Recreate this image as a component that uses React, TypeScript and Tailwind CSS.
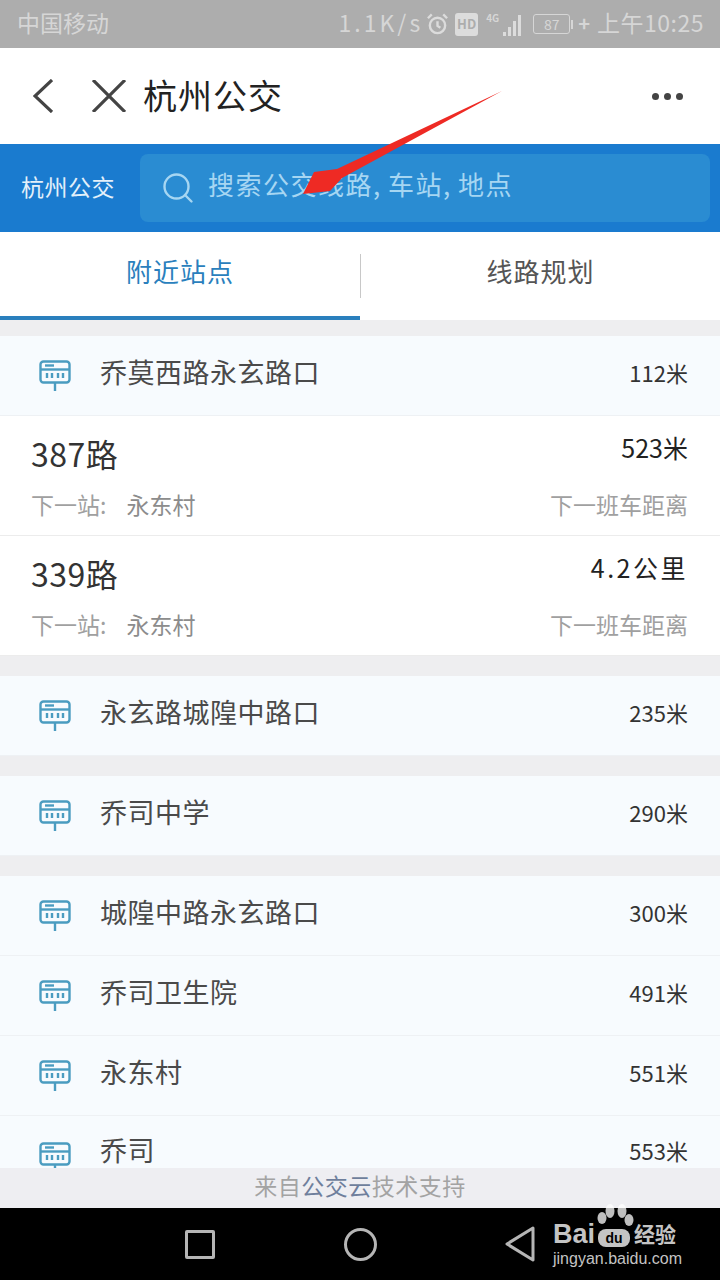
import { Search } from "lucide-react";

const font = { fontFamily: '"Noto Sans CJK SC", "Liberation Sans", sans-serif' };

function StopIcon() {
  return (
    <svg className="shrink-0" width="32" height="31" viewBox="0 0 32 31" fill="none" stroke="#4a9cc0" strokeWidth="2.4">
      <rect x="1.5" y="1.5" width="29" height="21" rx="3" />
      <path d="M1.5 9.5h29" />
      <path d="M6 5.5h9" />
      <path d="M8 13v5M13 13v5M19 13v5M24 13v5" />
      <path d="M16 22v9" />
    </svg>
  );
}

function Stop({ name, dist }: { name: string; dist: string }) {
  return (
    <div className="flex h-20 shrink-0 items-center border-b border-[#eef1f4] bg-[#f7fbfe] pl-[39px] pr-8">
      <StopIcon />
      <span className="ml-[29px] flex-1 pb-[6px] text-[27px] tracking-[0.5px] text-[#4a4a4a]">{name}</span>
      <span className="pb-[6px] text-[22px] text-[#333]">{dist}</span>
    </div>
  );
}

function Route({ name, dist, distClass }: { name: string; dist: string; distClass: string }) {
  return (
    <div className="flex h-[120px] shrink-0 flex-col justify-between border-b border-[#ececec] bg-white pt-[14px] pb-[14px] pl-[31px] pr-8">
      <div className="flex items-start justify-between">
        <span className="text-[32px] leading-[46px] tracking-[0.5px] text-[#333]">{name}</span>
        <span className={distClass}>{dist}</span>
      </div>
      <div className="flex items-center justify-between text-[23px] leading-[34px] text-[#a0a0a0]">
        <span>
          下一站:<span className="ml-5 text-[#8c8c8c]">永东村</span>
        </span>
        <span>下一班车距离</span>
      </div>
    </div>
  );
}

export default function App() {
  return (
    <div className="relative flex h-[1280px] w-[720px] flex-col overflow-hidden bg-white" style={font}>
      {/* status bar */}
      <div className="flex h-12 shrink-0 items-center bg-[#adadad] pl-[17px] pr-4 text-[#d6d6d6]">
        <span className="flex-1 pb-[3px] text-[23px]">中国移动</span>
        <span className="pb-[3px] text-[23px] tracking-[3px]">1.1K/s</span>
        <svg className="ml-[3px]" width="23" height="24" viewBox="0 0 24 24" fill="none" stroke="#dcdcdc" strokeWidth="2.5">
          <circle cx="12" cy="13.5" r="8" />
          <path d="M12 9v5l3 2M2 6l4-4M22 6l-4-4" />
        </svg>
        <span className="ml-[6px] flex h-[23px] w-[23px] items-center justify-center rounded-[3px] bg-[#dcdcdc] text-[13px] font-bold text-[#adadad]">
          HD
        </span>
        <span className="ml-2 flex h-6 items-end gap-[2px]">
          <span className="mr-[2px] self-start text-[10px] leading-[12px] font-bold">4G</span>
          <span className="h-[4px] w-[3px] bg-[#dcdcdc]" />
          <span className="h-[9px] w-[3px] bg-[#dcdcdc]" />
          <span className="h-[15px] w-[3px] bg-[#dcdcdc]" />
          <span className="h-[21px] w-[3px] bg-[#dcdcdc]" />
        </span>
        <span className="ml-[12px] flex h-[20px] w-[37px] items-center justify-center rounded-[3px] border border-[#d6d6d6] text-[14px] leading-none">
          87
        </span>
        <span className="ml-[1px] h-[9px] w-[2px] bg-[#d6d6d6]" />
        <span className="ml-[5px] pb-[3px] text-[20px] leading-none font-bold">+</span>
        <span className="ml-[7px] pb-[3px] text-[23px] tracking-[0.5px]">上午10:25</span>
      </div>

      {/* title bar */}
      <div className="flex h-24 shrink-0 items-center bg-white pr-[37px] pl-[33px] text-[#444]">
        <svg width="20" height="34" viewBox="0 0 20 34" fill="none" stroke="currentColor" strokeWidth="3.2">
          <path d="M19 1 L2 17 L19 33" />
        </svg>
        <svg className="ml-[39px]" width="34" height="32" viewBox="0 0 34 32" fill="none" stroke="currentColor" strokeWidth="3.2">
          <path d="M1 0 L33 32 M33 0 L1 32" />
        </svg>
        <span className="ml-[17px] flex-1 pb-[3px] text-[34px] tracking-[1px] text-[#222]">杭州公交</span>
        <span className="flex gap-[5px]">
          <span className="h-[7px] w-[7px] rounded-full bg-[#444]" />
          <span className="h-[7px] w-[7px] rounded-full bg-[#444]" />
          <span className="h-[7px] w-[7px] rounded-full bg-[#444]" />
        </span>
      </div>

      {/* search bar */}
      <div className="flex h-[88px] shrink-0 items-center bg-[#1a7bcf] pr-[10px] pl-[21px]">
        <span className="pb-[4px] text-[23px] tracking-[0.5px] text-[#e3f0fa]">杭州公交</span>
        <div className="ml-[25px] flex h-[68px] flex-1 items-center rounded-lg bg-[#2a8cd2] pl-[20px]">
          <Search size={36} strokeWidth={1.6} className="text-[#a6d6f2]" />
          <span className="ml-[12px] pb-[10px] text-[26px] tracking-[1.5px] text-[#a6d6f2]">
            搜索公交线路<span className="inline-block w-[15px]">,</span>车站<span className="inline-block w-[15px]">,</span>地点
          </span>
        </div>
      </div>

      {/* tabs */}
      <div className="flex h-[88px] shrink-0 bg-white">
        <div className="flex w-[360px] items-center justify-center border-b-4 border-[#2a7fbd] pb-[8px] text-[26px] tracking-[1px] text-[#2a7fbd]">
          附近站点
        </div>
        <div className="my-[22px] w-[1px] bg-[#c8c8c8]" />
        <div className="flex flex-1 items-center justify-center pb-[12px] text-[26px] tracking-[1px] text-[#555]">线路规划</div>
      </div>

      {/* list */}
      <div className="flex min-h-0 flex-1 flex-col overflow-hidden bg-[#eeeef0] pt-4">
        <Stop name="乔莫西路永玄路口" dist="112米" />
        <Route name="387路" dist="523米" distClass="text-[25px] leading-[34px] text-[#222]" />
        <Route name="339路" dist="4.2公里" distClass="text-[25px] leading-[34px] tracking-[2.5px] text-[#222]" />
        <div className="h-5 shrink-0" />
        <Stop name="永玄路城隍中路口" dist="235米" />
        <div className="h-5 shrink-0" />
        <Stop name="乔司中学" dist="290米" />
        <div className="h-5 shrink-0" />
        <Stop name="城隍中路永玄路口" dist="300米" />
        <Stop name="乔司卫生院" dist="491米" />
        <Stop name="永东村" dist="551米" />
        {/* last row runs under the footer */}
        <div className="flex h-[52px] shrink-0 items-start overflow-hidden bg-[#f7fbfe] pt-[18px] pl-[39px] pr-8">
          <div className="mt-[8px]">
            <StopIcon />
          </div>
          <span className="ml-[29px] flex-1 text-[27px] leading-[32px] tracking-[0.5px] text-[#4a4a4a]">乔司</span>
          <span className="text-[22px] leading-[32px] text-[#333]">553米</span>
        </div>
      </div>

      <div className="flex h-10 shrink-0 items-center justify-center bg-[#eeeef2] pb-[6px] text-[23px] tracking-[0.5px] text-[#a3a3a3]">
        来自<span className="text-[#6f7f9c]">公交云</span>技术支持
      </div>

      {/* nav bar */}
      <div className="flex h-[72px] shrink-0 items-center bg-black">
        <span className="ml-[185px] h-[29px] w-[30px] rounded-[2px] border-[3px] border-[#b5b5b5]" />
        <span className="ml-[129px] h-[33px] w-[33px] rounded-full border-[3px] border-[#b5b5b5]" />
        <svg className="ml-[128px]" width="30" height="36" viewBox="0 0 30 36" fill="none" stroke="#b5b5b5" strokeWidth="3" strokeLinejoin="round">
          <path d="M28 2 L2 18 L28 34 Z" />
        </svg>
      </div>

      {/* annotation arrow */}
      <svg className="absolute top-[85px] left-[295px]" width="215" height="115" viewBox="0 0 215 115">
        <path d="M207 6 L42 84 L19 87 L8 109 L35 106 L47 93 Z" fill="#ee2a24" />
      </svg>

      {/* watermark */}
      <div className="absolute top-[1203px] left-[596px]">
        <svg width="38" height="26" viewBox="0 0 38 26" fill="#ffffff" fillOpacity="0.75">
          <ellipse cx="6" cy="15" rx="4.5" ry="6" />
          <ellipse cx="14" cy="8" rx="4.5" ry="7" />
          <ellipse cx="26" cy="8" rx="4.5" ry="7" />
          <ellipse cx="33" cy="17" rx="4.5" ry="6" />
        </svg>
      </div>
      <div className="absolute top-[1219px] left-[553px] flex flex-col text-[#c4c4c4]" style={{ fontFamily: '"Liberation Sans", "Noto Sans CJK SC", sans-serif' }}>
        <div className="flex h-[30px] items-center text-[27px] font-bold">
          Bai
          <span className="mt-[7px] ml-[3px] flex h-[18px] w-[32px] items-center justify-center rounded-[8px] bg-[#c4c4c4] text-[14px] leading-none text-black">du</span>
          <span className="ml-[4px] text-[21px] leading-none">经验</span>
        </div>
        <span className="text-[16px] leading-[20px]">jingyan.baidu.com</span>
      </div>
    </div>
  );
}
